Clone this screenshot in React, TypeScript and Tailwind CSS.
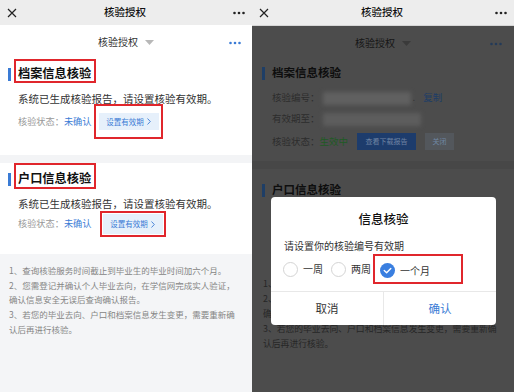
import React from 'react';

const notes = [
  '1、查询核验服务时间截止到毕业生的毕业时间加六个月。',
  '2、您需登记并确认个人毕业去向，在学信网完成实人验证，',
  '确认信息安全无误后查询确认报告。',
  '3、若您的毕业去向、户口和档案信息发生变更，需要重新确',
  '认后再进行核验。',
];

function CloseIcon({ color }: { color: string }) {
  return (
    <svg width="10" height="10" viewBox="0 0 10 10">
      <path d="M1 1 L9 9 M9 1 L1 9" stroke={color} strokeWidth="1.2" />
    </svg>
  );
}

function Dots({ color }: { color: string }) {
  return (
    <svg width="12" height="4" viewBox="0 0 12 4">
      <circle cx="1.5" cy="2" r="1.3" fill={color} />
      <circle cx="6" cy="2" r="1.3" fill={color} />
      <circle cx="10.5" cy="2" r="1.3" fill={color} />
    </svg>
  );
}

function Caret({ color }: { color: string }) {
  return (
    <svg width="9" height="5" viewBox="0 0 9 5">
      <path d="M0 0 H9 L4.5 5 Z" fill={color} />
    </svg>
  );
}

function TopBar({ dark }: { dark?: boolean }) {
  return (
    <div
      className={`flex items-center justify-between px-[7px] bg-[#ededed] ${
        dark ? 'h-[26px] border-b border-[#d6d6d6]' : 'h-[25px]'
      }`}
    >
      <CloseIcon color="#222" />
      <span className="text-[10.5px] font-medium text-[#111] leading-none">核验授权</span>
      <Dots color="#222" />
    </div>
  );
}

function LeftPhone() {
  return (
    <div className="w-[252px] h-full flex flex-col bg-[#f4f5f7]">
      <TopBar />

      {/* page header */}
      <div className="relative h-[34px] bg-white flex items-center justify-center gap-[7px]">
        <span className="text-[10px] text-[#333] leading-none">核验授权</span>
        <Caret color="#b8b8b8" />
        <div className="absolute right-[11px] top-[16px]">
          <Dots color="#3a7bd5" />
        </div>
      </div>

      {/* 档案信息核验 */}
      <div className="bg-white pb-[16px]">
        <div className="flex items-end h-[24px]">
          <div className="ml-[8px] mb-[2px] w-[2.5px] h-[13px] bg-[#3a7bd5]" />
          <div className="ml-[3.5px] h-[24px] border-2 border-[#e0262c] pl-[2px] pr-[3px] pt-[4px]">
            <div className="text-[12.2px] font-bold text-[#111] leading-[16px]">档案信息核验</div>
          </div>
        </div>
        <div className="mt-[9px] pl-[18px] text-[10.5px] text-[#333] leading-[14px] whitespace-nowrap">
          系统已生成核验报告，请设置核验有效期。
        </div>
        <div className="mt-[-2px] flex items-center pl-[18px]">
          <span className="text-[9.2px] text-[#999] leading-none">核验状态：</span>
          <span className="text-[9.2px] text-[#3a7bd5] leading-none">未确认</span>
          <div className="ml-[2px] border-2 border-[#e0262c] pl-[3px] pr-[2px] py-[7px]">
            <div className="w-[60px] h-[17px] bg-[#e6f0fb] flex items-center justify-center gap-[3px] text-[7.5px] text-[#3a7bd5] leading-none">
              设置有效期
              <svg width="4" height="7" viewBox="0 0 4 7">
                <path d="M0.5 0.5 L3.3 3.5 L0.5 6.5" stroke="#3a7bd5" strokeWidth="0.9" fill="none" />
              </svg>
            </div>
          </div>
        </div>
      </div>

      <div className="h-[8px] bg-[#f3f4f6]" />

      {/* 户口信息核验 */}
      <div className="bg-white pb-[17px]">
        <div className="flex items-end h-[26px]">
          <div className="ml-[8px] mb-[3px] w-[2.5px] h-[13px] bg-[#3a7bd5]" />
          <div className="ml-[3.5px] h-[26px] border-2 border-[#e0262c] pl-[2px] pr-[3px] pt-[5px]">
            <div className="text-[12.2px] font-bold text-[#111] leading-[16px]">户口信息核验</div>
          </div>
        </div>
        <div className="mt-[8px] pl-[18px] text-[10.5px] text-[#333] leading-[14px] whitespace-nowrap">
          系统已生成核验报告，请设置核验有效期。
        </div>
        <div className="flex items-center pl-[18px]">
          <span className="text-[9.2px] text-[#999] leading-none">核验状态：</span>
          <span className="text-[9.2px] text-[#3a7bd5] leading-none">未确认</span>
          <div className="ml-[8px] border-2 border-[#e0262c] p-[1px]">
            <div className="w-[60px] h-[20px] bg-[#e6f0fb] flex items-center justify-center gap-[3px] text-[7.5px] text-[#3a7bd5] leading-none">
              设置有效期
              <svg width="4" height="7" viewBox="0 0 4 7">
                <path d="M0.5 0.5 L3.3 3.5 L0.5 6.5" stroke="#3a7bd5" strokeWidth="0.9" fill="none" />
              </svg>
            </div>
          </div>
        </div>
      </div>

      {/* notes */}
      <div className="pt-[9px] pl-[9px] text-[8.5px] leading-[14.7px] text-[#858585]">
        {notes.map((line) => (
          <div key={line} className="whitespace-nowrap">{line}</div>
        ))}
      </div>
    </div>
  );
}

function Radio({ checked }: { checked?: boolean }) {
  if (checked) {
    return (
      <svg width="15" height="15" viewBox="0 0 15 15">
        <circle cx="7.5" cy="7.5" r="7.5" fill="#3a7fe0" />
        <path d="M4.2 7.6 L6.6 9.8 L10.8 5.4" stroke="#fff" strokeWidth="1.4" fill="none" strokeLinecap="round" strokeLinejoin="round" />
      </svg>
    );
  }
  return <div className="w-[15px] h-[15px] rounded-full border border-[#d4d4d4]" />;
}

function RightPhone() {
  return (
    <div className="relative w-[262px] h-full flex flex-col bg-[#4c4c4c]">
      <TopBar dark />

      {/* dimmed page underneath the dialog */}
      <div className="relative h-[34px] flex items-center justify-center gap-[7px]">
        <span className="text-[10px] text-[#161616] leading-none">核验授权</span>
        <Caret color="#3a3a3a" />
        <div className="absolute right-[12px] top-[16px]">
          <Dots color="#233a58" />
        </div>
      </div>

      <div className="pt-[5px] pb-[11px]">
        <div className="flex items-center h-[16px]">
          <div className="ml-[10px] w-[2.5px] h-[13px] bg-[#1e3e66]" />
          <span className="ml-[7.5px] text-[11.5px] font-bold text-[#0e0e0e] leading-none">档案信息核验</span>
        </div>
        <div className="mt-[9px] flex items-center h-[16px] pl-[20px] text-[9.5px] leading-none">
          <span className="text-[#2c2c2c]">核验编号：</span>
          <div className="ml-[3px] w-[88px] h-[13px] bg-[#606060] blur-[2px]" />
          <span className="ml-[2px] text-[#2c2c2c]">.</span>
          <span className="ml-[8px] text-[#1d3d66]">复制</span>
        </div>
        <div className="mt-[5px] flex items-center h-[16px] pl-[20px] text-[9.5px] leading-none">
          <span className="text-[#2c2c2c]">有效期至：</span>
          <div className="ml-[3px] w-[98px] h-[13px] bg-[#5d5d5d] blur-[2px]" />
        </div>
        <div className="mt-[6px] flex items-center pl-[20px] text-[9.5px] leading-none">
          <span className="text-[#2c2c2c]">核验状态：</span>
          <span className="text-[#1f5a24]">生效中</span>
          <div className="ml-[9px] w-[59px] h-[17px] bg-[#1d3c6c] flex items-center justify-center text-[7px] text-[#6f84a3]">
            查看下载报告
          </div>
          <div className="ml-[9px] w-[29px] h-[17px] bg-[#53575c] flex items-center justify-center text-[7px] text-[#7088a4]">
            关闭
          </div>
        </div>
      </div>

      <div className="h-[8px] bg-[#474747]" />

      <div className="pt-[13px] h-[96px]">
        <div className="flex items-center h-[16px]">
          <div className="ml-[10px] w-[2.5px] h-[13px] bg-[#1e3e66]" />
          <span className="ml-[7.5px] text-[11.5px] font-bold text-[#0e0e0e] leading-none">户口信息核验</span>
        </div>
      </div>

      <div className="pt-[11px] pl-[11px] text-[8.8px] leading-[15px] text-[#262626]">
        {notes.map((line) => (
          <div key={line} className="whitespace-nowrap">{line}</div>
        ))}
      </div>

      {/* dialog */}
      <div className="absolute left-[19px] top-[197px] w-[225px] h-[128px] bg-white rounded-[4px] flex flex-col">
        <div className="pt-[13px] text-center text-[12.5px] font-medium text-[#111] leading-[18px]">信息核验</div>
        <div className="mt-[11px] pl-[13px] text-[10px] text-[#333] leading-[14px]">请设置你的核验编号有效期</div>
        <div className="mt-[1px] flex items-center pl-[12px] text-[10px] text-[#333] leading-none">
          <Radio />
          <span className="ml-[5px]">一周</span>
          <div className="ml-[8px]"><Radio /></div>
          <span className="ml-[5px]">两周</span>
          <div className="ml-[2px] h-[30px] border-2 border-[#e0262c] flex items-center pl-[5px] pr-[31px] pt-[3px]">
            <Radio checked />
            <span className="ml-[5px]">一个月</span>
          </div>
        </div>
        <div className="mt-[7px] flex-1 flex border-t border-[#e8e8e8] text-[11.5px] leading-none">
          <div className="flex-1 flex items-center justify-center text-[#333]">取消</div>
          <div className="flex-1 flex items-center justify-center text-[#3a7bd5] border-l border-[#e8e8e8]">确认</div>
        </div>
      </div>
    </div>
  );
}

export default function App() {
  return (
    <div className="flex w-[514px] h-[392px] overflow-hidden font-['Noto_Sans_CJK_SC','Noto_Sans',sans-serif]">
      <LeftPhone />
      <RightPhone />
    </div>
  );
}
